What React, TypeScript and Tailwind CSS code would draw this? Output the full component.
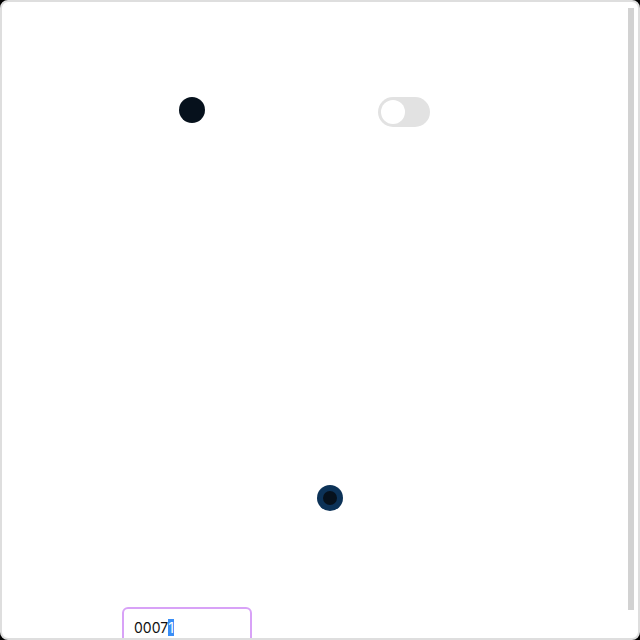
export default function App() {
  return (
    <div className="w-[640px] h-[640px] bg-black">
      <div className="h-full flex rounded-lg border-2 border-[#dedede] bg-white overflow-hidden">
        <div className="flex-1 flex flex-col pt-[95px]" style={{ fontFamily: "Inter, 'Noto Sans', sans-serif" }}>
          <div className="flex items-start pl-[177px]">
            <div className="w-[26px] h-[26px] rounded-full bg-[#06111c]" />
            <div className="ml-[173px] w-[52px] h-[30px] rounded-full bg-[#e2e2e2] p-[3px] flex items-center">
              <div className="w-[24px] h-[24px] rounded-full bg-white" />
            </div>
          </div>
          <div className="mt-[358px] pl-[315px]">
            <div className="w-[26px] h-[26px] rounded-full bg-[#0c3257] flex items-center justify-center">
              <div className="w-[14px] h-[14px] rounded-full bg-[#06111c]" />
            </div>
          </div>
          <div className="mt-[96px] pl-[120px]">
            <div className="w-[130px] h-[38px] rounded-md border-2 border-[#d8a2f7] px-[10px] pt-[9px] text-[14px] text-[#111] leading-[20px]">
              0007<span className="bg-[#3a8ef6] text-white">1</span>
            </div>
          </div>
        </div>
        <div className="w-[10px] pt-[6px] pr-[4px]">
          <div className="w-[6px] h-[602px] bg-[#d2d2d2]" />
        </div>
      </div>
    </div>
  );
}
